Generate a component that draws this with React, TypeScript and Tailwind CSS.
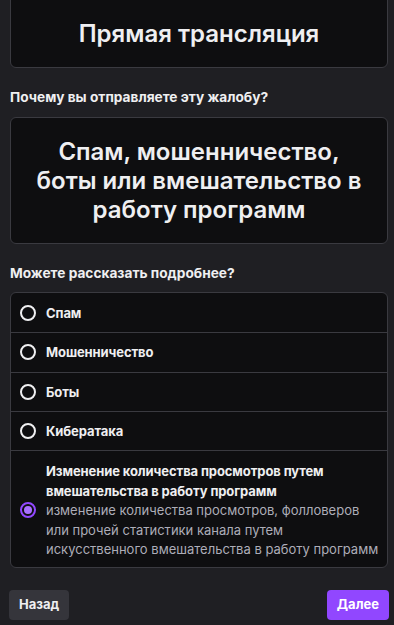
import React, { useState } from 'react';

const options = [
  { id: 'spam', label: 'Спам' },
  { id: 'fraud', label: 'Мошенничество' },
  { id: 'bots', label: 'Боты' },
  { id: 'cyber', label: 'Кибератака' },
  {
    id: 'views',
    label: 'Изменение количества просмотров путем вмешательства в работу программ',
    description:
      'изменение количества просмотров, фолловеров или прочей статистики канала путем искусственного вмешательства в работу программ',
  },
];

const Radio: React.FC<{ checked: boolean }> = ({ checked }) =>
  checked ? (
    <span className="flex h-[16px] w-[16px] shrink-0 items-center justify-center rounded-full border-2 border-[#9147ff]">
      <span className="h-[8px] w-[8px] rounded-full bg-[#a970ff]" />
    </span>
  ) : (
    <span className="h-[16px] w-[16px] shrink-0 rounded-full border-2 border-[#efeff1]" />
  );

export default function App() {
  const [selected, setSelected] = useState('views');

  return (
    <div
      className="h-[625px] w-[394px] overflow-hidden bg-[#1f1f23] text-[#efeff1]"
      style={{ fontFamily: 'Inter, "Noto Sans", sans-serif' }}
    >
      <div className="ml-[10px] w-[378px]">
        <div className="-mt-[10px] rounded-[6px] border border-[#3a3a40] bg-[#0e0e10] pb-[18px] pt-[28px] text-center text-[24px] font-semibold leading-[30px]">
          Прямая трансляция
        </div>

        <p className="mb-[11px] mt-[20px] text-[13.7px] font-bold leading-[18px]">
          Почему вы отправляете эту жалобу?
        </p>

        <div className="rounded-[6px] border border-[#3a3a40] bg-[#0e0e10] px-[22px] py-[19px] text-center text-[24px] font-semibold leading-[29px]">
          Спам, мошенничество, боты или вмешательство в работу программ
        </div>

        <p className="mb-[10px] mt-[20px] text-[13.7px] font-bold leading-[18px]">
          Можете рассказать подробнее?
        </p>

        <div className="overflow-hidden rounded-[6px] border border-[#3a3a40] bg-[#0e0e10]">
          {options.map((o, i) => (
            <button
              key={o.id}
              type="button"
              onClick={() => setSelected(o.id)}
              className={`flex w-full items-center gap-[10px] pl-[9px] pr-[8px] text-left ${
                i > 0 ? 'border-t border-[#3a3a40]' : ''
              } ${o.description ? 'pb-[7px] pt-[10px]' : 'h-[39.25px]'}`}
            >
              <Radio checked={selected === o.id} />
              <span className="min-w-0">
                <span className="block text-[13px] font-bold leading-[20px] tracking-[-0.1px]">{o.label}</span>
                {o.description && (
                  <span className="block text-[13px] leading-[19.5px] text-[#adadb8]">{o.description}</span>
                )}
              </span>
            </button>
          ))}
        </div>

        <div className="mt-[22px] flex items-center justify-between">
          <button
            type="button"
            className="-ml-[1px] h-[30px] rounded-[4px] bg-[#35353b] px-[10px] text-[13px] font-bold"
          >
            Назад
          </button>
          <button
            type="button"
            className="-mr-[1px] h-[30px] rounded-[4px] bg-[#9147ff] px-[10px] text-[13px] font-bold text-white"
          >
            Далее
          </button>
        </div>
      </div>
    </div>
  );
}
